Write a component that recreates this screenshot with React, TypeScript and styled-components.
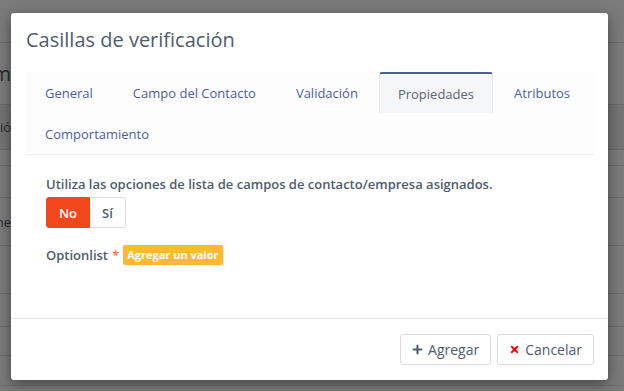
import styled, { createGlobalStyle } from "styled-components";
import { FaPlus, FaTimes } from "react-icons/fa";

const GlobalStyle = createGlobalStyle`
  html, body {
    margin: 0;
    padding: 0;
    width: 624px;
    height: 391px;
    overflow: hidden;
    background: #7a7a7a;
    font-family: "Open Sans", "Liberation Sans", sans-serif;
  }
`;

const Screen = styled.div`
  position: relative;
  width: 624px;
  height: 391px;
  overflow: hidden;
`;

const Backdrop = styled.div`
  display: flex;
  flex-direction: column;
  width: 100%;
  height: 100%;
  background: #7b7b7b;
`;

const BackRow = styled.div<{ $h: number; $shade?: boolean }>`
  display: flex;
  align-items: center;
  height: ${(p) => p.$h}px;
  border-bottom: 1px solid #6c6c6c;
  background: ${(p) => (p.$shade ? "#747474" : "#7b7b7b")};
  flex-shrink: 0;
`;

const BackText = styled.span<{ $size: number }>`
  display: block;
  width: 11px;
  overflow: hidden;
  direction: rtl;
  white-space: nowrap;
  font-size: ${(p) => p.$size}px;
  color: #262a2f;
`;

const Modal = styled.div`
  position: absolute;
  left: 11px;
  top: 13px;
  width: 597px;
  height: 367px;
  display: flex;
  flex-direction: column;
  background: #fff;
  border-radius: 3px;
  box-shadow: 0 4px 14px rgba(0, 0, 0, 0.45);
`;

const Header = styled.div`
  padding: 12px 15px 18px;
`;

const Title = styled.h4`
  margin: 0;
  font-size: 20px;
  font-weight: 400;
  line-height: 29px;
  color: #4e5d6c;
`;

const Body = styled.div`
  flex: 1;
  padding: 0 14px 0 15px;
`;

const Tabs = styled.nav`
  display: flex;
  flex-wrap: wrap;
  gap: 0 2px;
  background: #fdfdfd;
  border-bottom: 1px solid #ebedf0;
`;

const Tab = styled.div<{ $active?: boolean }>`
  display: flex;
  align-items: center;
  height: 41px;
  box-sizing: border-box;
  padding: ${(p) => (p.$active ? "0 18px" : "0 19px")};
  font-size: 13px;
  white-space: nowrap;
  color: ${(p) => (p.$active ? "#5d6670" : "#4e5d9d")};
  ${(p) =>
    p.$active &&
    `
    background: #f5f6f8;
    border-top: 2px solid #4e5d9d;
    border-left: 1px solid #e8eaee;
    border-right: 1px solid #e8eaee;
    border-radius: 3px 3px 0 0;
  `}
`;

const Pane = styled.div`
  padding: 20px 20px 0;
`;

const Label = styled.div`
  display: flex;
  align-items: center;
  gap: 4px;
  font-size: 13px;
  font-weight: 600;
  line-height: 18px;
  color: #4e5d6c;
`;

const Required = styled.span`
  color: #f86b4f;
`;

const ButtonGroup = styled.div`
  display: inline-flex;
  margin: 4px 0 17px;
`;

const ToggleButton = styled.button<{ $on?: boolean; $w: number }>`
  width: ${(p) => p.$w}px;
  height: 31px;
  font-family: inherit;
  font-size: 13px;
  font-weight: 600;
  color: ${(p) => (p.$on ? "#fff" : "#4e5d6c")};
  background: ${(p) => (p.$on ? "#f2461b" : "#fff")};
  border: 1px solid ${(p) => (p.$on ? "#f2461b" : "#ddd")};
  padding: 0;
  &:first-child {
    border-radius: 3px 0 0 3px;
  }
  &:last-child {
    border-left: none;
    border-radius: 0 3px 3px 0;
  }
`;

const Badge = styled.span`
  display: inline-flex;
  align-items: center;
  height: 20px;
  padding: 0 4px;
  border-radius: 2px;
  background: #fdb933;
  color: #fff;
  font-size: 11px;
  font-weight: 700;
`;

const Footer = styled.div`
  display: flex;
  justify-content: flex-end;
  gap: 6px;
  padding: 15px 14px 15px;
  border-top: 1px solid #e5e5e5;
`;

const Button = styled.button`
  display: inline-flex;
  align-items: center;
  gap: 5px;
  height: 31px;
  padding: 0 11px;
  font-family: inherit;
  font-size: 14px;
  color: #4e5d6c;
  background: #fff;
  border: 1px solid #ddd;
  border-radius: 3px;
`;

const Icon = styled.span<{ $color: string }>`
  display: inline-flex;
  color: ${(p) => p.$color};
  font-size: 11px;
`;

const tabs = [
  "General",
  "Campo del Contacto",
  "Validación",
  "Propiedades",
  "Atributos",
  "Comportamiento",
];

export default function App() {
  return (
    <Screen>
      <GlobalStyle />
      <Backdrop>
        <BackRow $h={42} />
        <BackRow $h={61}>
          <BackText $size={20}>m</BackText>
        </BackRow>
        <BackRow $h={44} $shade>
          <BackText $size={13}>ció</BackText>
        </BackRow>
        <BackRow $h={15} />
        <BackRow $h={31} />
        <BackRow $h={47}>
          <BackText $size={13}>ne</BackText>
        </BackRow>
        <BackRow $h={47} />
        <BackRow $h={32} />
        <BackRow $h={28} />
        <BackRow $h={29} />
      </Backdrop>
      <Modal>
        <Header>
          <Title>Casillas de verificación</Title>
        </Header>
        <Body>
          <Tabs>
            {tabs.map((t) => (
              <Tab key={t} $active={t === "Propiedades"}>
                {t}
              </Tab>
            ))}
          </Tabs>
          <Pane>
            <Label>Utiliza las opciones de lista de campos de contacto/empresa asignados.</Label>
            <ButtonGroup>
              <ToggleButton $on $w={44}>
                No
              </ToggleButton>
              <ToggleButton $w={36}>Sí</ToggleButton>
            </ButtonGroup>
            <Label>
              Optionlist <Required>*</Required>
              <Badge>Agregar un valor</Badge>
            </Label>
          </Pane>
        </Body>
        <Footer>
          <Button>
            <Icon $color="#4e5d6c">
              <FaPlus />
            </Icon>
            Agregar
          </Button>
          <Button>
            <Icon $color="#f00">
              <FaTimes />
            </Icon>
            Cancelar
          </Button>
        </Footer>
      </Modal>
    </Screen>
  );
}
